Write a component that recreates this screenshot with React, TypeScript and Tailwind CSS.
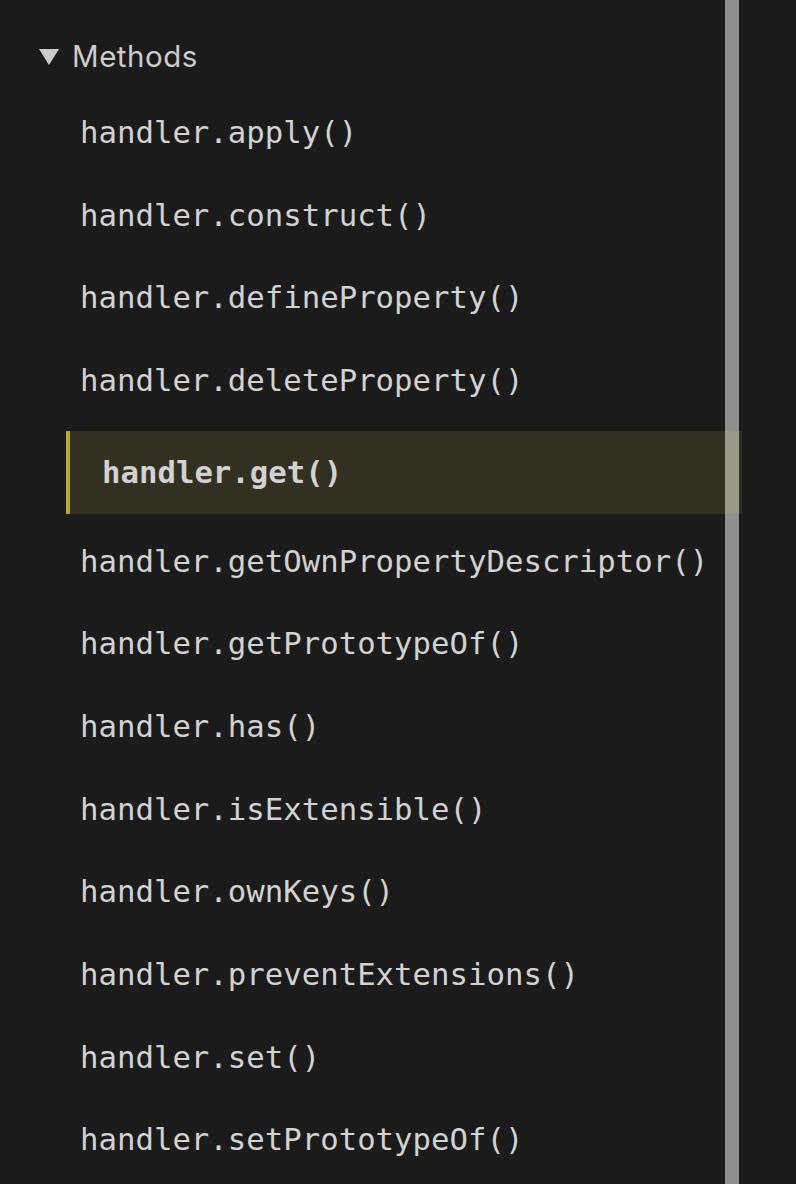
import React from 'react';

const methods = [
  'apply',
  'construct',
  'defineProperty',
  'deleteProperty',
  'get',
  'getOwnPropertyDescriptor',
  'getPrototypeOf',
  'has',
  'isExtensible',
  'ownKeys',
  'preventExtensions',
  'set',
  'setPrototypeOf',
];

const active = 'get';

export default function App() {
  return (
    <div className="relative w-[796px] h-[1184px] overflow-hidden bg-[#1b1b1b]">
      {/* section header */}
      <div className="h-[92px] pt-[38px] pl-[39px] flex items-start gap-[13px] text-[#cccccc] font-['Inter',sans-serif] text-[29.5px] tracking-[0.5px] leading-[36px]">
        <svg width="20" height="16" viewBox="0 0 20 16" className="mt-[11px] shrink-0">
          <path d="M0 0 H20 L10 16 Z" fill="#cccccc" />
        </svg>
        <span>Methods</span>
      </div>

      <ul className="font-['DejaVu_Sans_Mono',monospace] text-[30.7px] text-[#d2d2d2]">
        {methods.map((m) =>
          m === active ? (
            <li
              key={m}
              className="relative z-10 ml-[66px] w-[676px] h-[83px] mt-[8px] mb-[7px] border-l-4 border-[#b6a92f] bg-[rgba(247,237,87,0.1)] pl-[32px] leading-[83px] font-bold"
            >
              handler.{m}()
            </li>
          ) : (
            <li key={m} className="h-[82.67px] leading-[82.67px] pl-[80px] whitespace-nowrap">
              handler.{m}()
            </li>
          )
        )}
      </ul>

      {/* scrollbar thumb */}
      <div className="absolute top-0 left-[725px] w-[14px] h-full bg-[#8f8f8f]" />
    </div>
  );
}
